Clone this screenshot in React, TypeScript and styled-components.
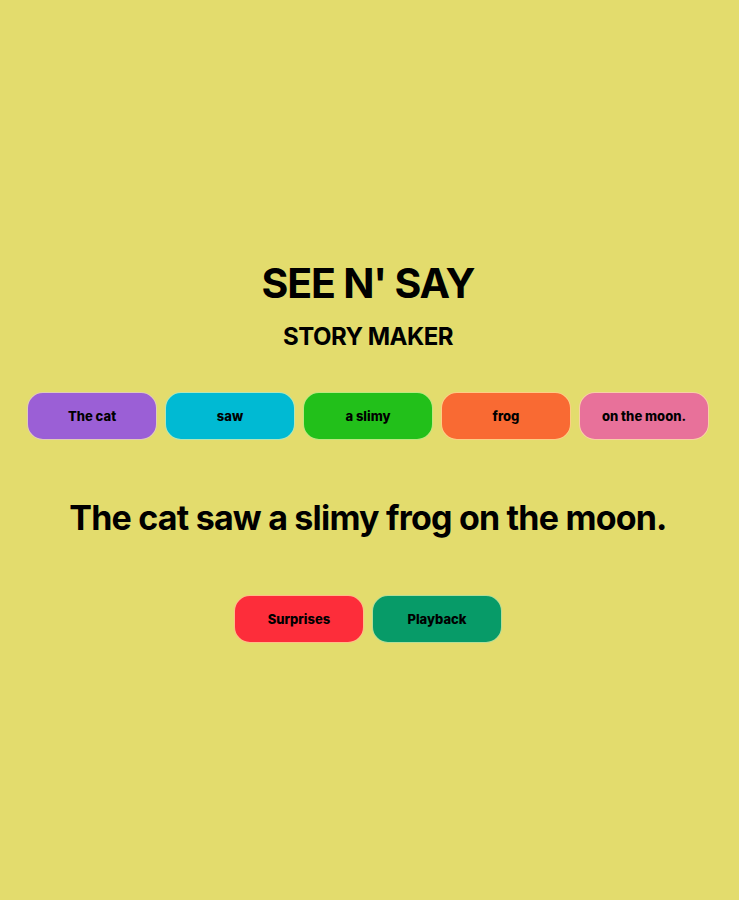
import React from "react";
import styled, { createGlobalStyle } from "styled-components";

const Global = createGlobalStyle`
  html, body { margin: 0; padding: 0; background: #e3dc6d; }
  body { font-family: Inter, "Noto Sans", sans-serif; color: #000; }
`;

const Page = styled.main`
  min-height: 100vh;
  display: flex;
  flex-direction: column;
  align-items: center;
  justify-content: center;
  box-sizing: border-box;
  padding: 2px 3px 0 0;
`;

const Title = styled.h1`
  margin: 0;
  font-size: 41px;
  font-weight: 700;
  line-height: 48px;
  letter-spacing: -1.2px;
`;

const Subtitle = styled.h2`
  margin: 14px 0 0;
  font-size: 24px;
  font-weight: 700;
  line-height: 32px;
  letter-spacing: -0.5px;
`;

const Row = styled.div`
  display: flex;
  gap: 8px;
  justify-content: center;
`;

const WordRow = styled(Row)`
  margin-top: 39px;
`;

const ActionRow = styled(Row)`
  margin-top: 57px;
`;

const Pill = styled.button<{ $bg: string }>`
  box-sizing: border-box;
  width: 130px;
  height: 48px;
  border-radius: 16px;
  border: 1px solid rgba(255, 250, 170, 0.7);
  background: ${(p) => p.$bg};
  color: #000;
  font-family: Inter, "Noto Sans", sans-serif;
  font-size: 13px;
  font-weight: 800;
  cursor: pointer;
  padding: 0;
`;

const Sentence = styled.p`
  margin: 58px 0 0;
  font-size: 34px;
  font-weight: 700;
  line-height: 40px;
  letter-spacing: -0.8px;
  text-align: center;
`;

const words = [
  { text: "The cat", bg: "#9b5fd6" },
  { text: "saw", bg: "#00bad3" },
  { text: "a slimy", bg: "#22c01a" },
  { text: "frog", bg: "#f96a33" },
  { text: "on the moon.", bg: "#e8719a" },
];

export default function App() {
  return (
    <>
      <Global />
      <Page>
        <Title>SEE N' SAY</Title>
        <Subtitle>STORY MAKER</Subtitle>
        <WordRow>
          {words.map((w) => (
            <Pill key={w.text} $bg={w.bg}>
              {w.text}
            </Pill>
          ))}
        </WordRow>
        <Sentence>The cat saw a slimy frog on the moon.</Sentence>
        <ActionRow>
          <Pill $bg="#fd2d3a">Surprises</Pill>
          <Pill $bg="#079b68">Playback</Pill>
        </ActionRow>
      </Page>
    </>
  );
}
